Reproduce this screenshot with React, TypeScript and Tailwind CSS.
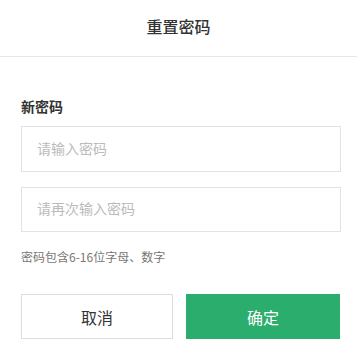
import React, { useState } from "react";

export default function App() {
  const [pwd, setPwd] = useState("");
  const [pwd2, setPwd2] = useState("");

  return (
    <div className="w-[357px] h-[348px] bg-white font-['Noto_Sans_CJK_SC','Noto_Sans',sans-serif] text-[#333]">
      {/* Header */}
      <div className="h-[57px] pb-[5px] flex items-center justify-center border-b border-[#e6e6e6]">
        <h1 className="text-[16px] font-medium leading-none">重置密码</h1>
      </div>

      {/* Form */}
      <div className="pl-[21px] w-[341px]">
        <div className="mt-[39px] text-[14px] leading-[20px] font-bold">新密码</div>
        <input
          type="password"
          value={pwd}
          onChange={(e) => setPwd(e.target.value)}
          placeholder="请输入密码"
          className="mt-[10px] block w-[320px] h-[46px] border border-[#e3e3e3] px-[15px] pb-[3px] text-[14px] outline-none placeholder:text-[#bbb]"
        />
        <input
          type="password"
          value={pwd2}
          onChange={(e) => setPwd2(e.target.value)}
          placeholder="请再次输入密码"
          className="mt-[15px] block w-[320px] h-[45px] border border-[#e3e3e3] px-[15px] pb-[3px] text-[14px] outline-none placeholder:text-[#bbb]"
        />
        <div className="mt-[16px] text-[12px] leading-[18px] text-[#777]">密码包含6-16位字母、数字</div>

        <div className="mt-[28px] flex gap-[13px]">
          <button className="w-[152px] h-[45px] border border-[#ddd] bg-white text-[16px] text-[#333]">
            取消
          </button>
          <button className="w-[154px] h-[45px] bg-[#2bad6e] text-[16px] text-white">
            确定
          </button>
        </div>
      </div>
    </div>
  );
}
